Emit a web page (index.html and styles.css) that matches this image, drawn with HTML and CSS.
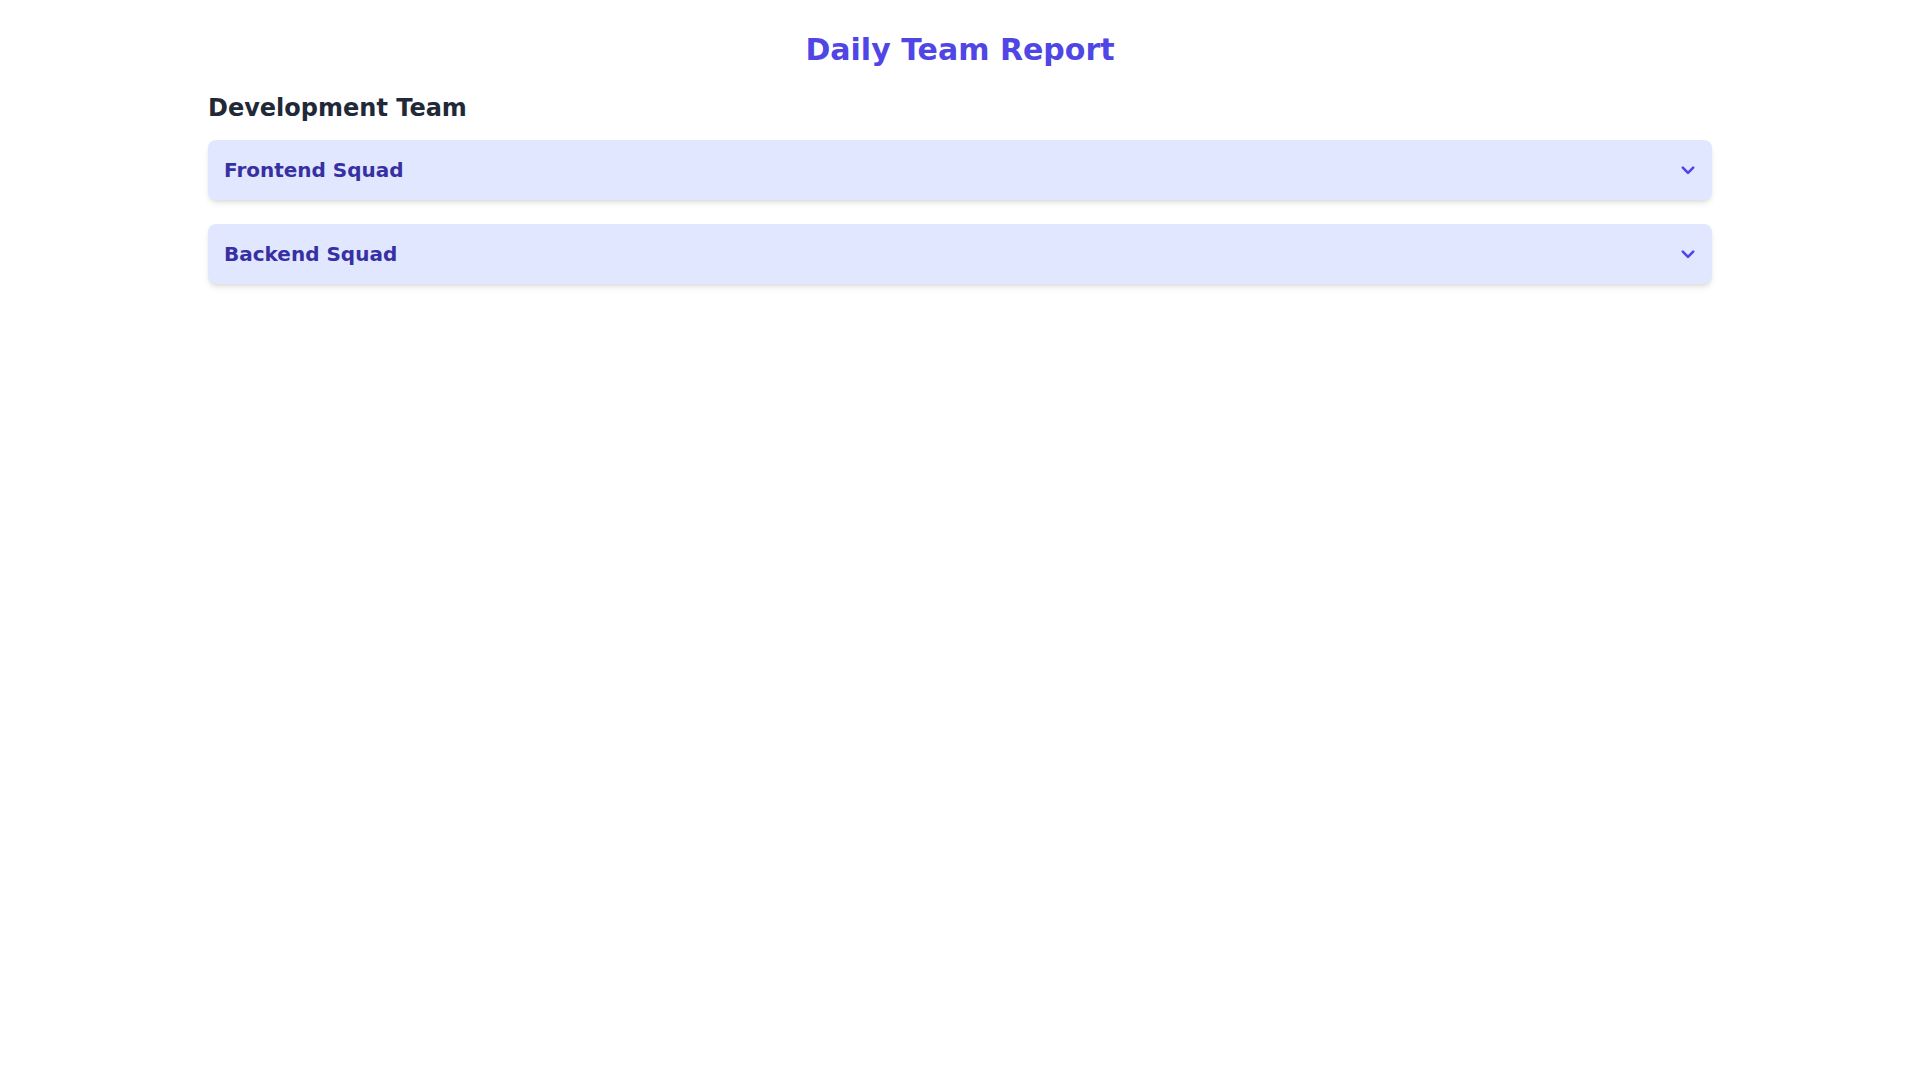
FILE: index.html
```html
<!DOCTYPE html>
<html lang="en">
<head>
<meta charset="utf-8">
<title>Daily Team Report</title>
<link rel="stylesheet" href="styles.css">
</head>
<body>
<main class="container">
  <h1 class="title">Daily Team Report</h1>
  <section class="team">
    <h2 class="team-name">Development Team</h2>
    <div class="squad">
      <span class="squad-name">Frontend Squad</span>
      <svg class="chevron" viewBox="0 0 16 16" fill="none" stroke="currentColor" stroke-width="2.6" stroke-linecap="round" stroke-linejoin="round"><path d="M2.8 5.6L8 10.8l5.2-5.2"/></svg>
    </div>
    <div class="squad">
      <span class="squad-name">Backend Squad</span>
      <svg class="chevron" viewBox="0 0 16 16" fill="none" stroke="currentColor" stroke-width="2.6" stroke-linecap="round" stroke-linejoin="round"><path d="M2.8 5.6L8 10.8l5.2-5.2"/></svg>
    </div>
  </section>
</main>
</body>
</html>
```

FILE: styles.css
```css
* { box-sizing: border-box; }
html, body { margin: 0; padding: 0; background: #ffffff; }
body {
  font-family: "DejaVu Sans", "Noto Sans", sans-serif;
}
.container {
  max-width: 1536px;
  margin: 0 auto;
  padding: 32px 16px;
}
.title {
  margin: 0 0 24px;
  text-align: center;
  font-size: 30px;
  line-height: 36px;
  font-weight: 700;
  color: #4f46e5;
}
.team-name {
  margin: 0 0 16px;
  font-size: 24px;
  line-height: 32px;
  font-weight: 700;
  color: #1f2937;
}
.squad {
  display: flex;
  align-items: center;
  justify-content: space-between;
  padding: 16px;
  margin-bottom: 24px;
  background: #e0e7ff;
  border-radius: 8px;
  box-shadow: 0 4px 6px -1px rgba(0,0,0,0.1), 0 2px 4px -2px rgba(0,0,0,0.1);
}
.squad-name {
  font-size: 20px;
  line-height: 28px;
  font-weight: 700;
  color: #3730a3;
}
.chevron {
  width: 16px;
  height: 16px;
  color: #4f46e5;
}
```
